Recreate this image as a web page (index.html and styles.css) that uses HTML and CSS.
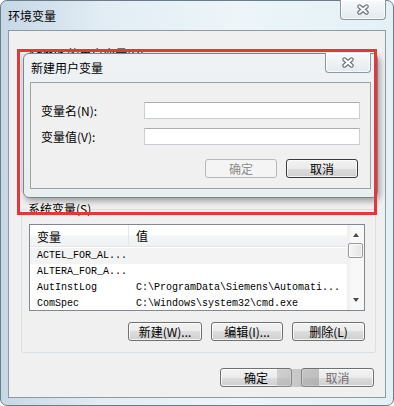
FILE: index.html
```html
<!DOCTYPE html>
<html lang="zh-CN">
  <head>
    <meta charset="UTF-8" />
    <title>环境变量</title>
    <link rel="stylesheet" href="styles.css">
  </head>
  <body>
    <div class="window">
      <div class="titlebar">
        <span class="title">环境变量</span>
        <button class="close" title="关闭">
          <svg width="14" height="11" viewBox="0 0 14 11">
            <path d="M3.5 2.5 L10.5 8.5 M10.5 2.5 L3.5 8.5" stroke="#66717b" stroke-width="4.4" stroke-linecap="round" fill="none" />
            <path d="M3.5 2.5 L10.5 8.5 M10.5 2.5 L3.5 8.5" stroke="#fff" stroke-width="2.2" stroke-linecap="round" fill="none" />
          </svg>
        </button>
      </div>

      <div class="client">
        <fieldset class="group user-group">
          <legend>Admin 的用户变量(U)</legend>
        </fieldset>

        <fieldset class="group sys-group">
          <legend>系统变量(S)</legend>
          <div class="listview">
            <div class="list-main">
              <div class="list-head">
                <span class="col-name">变量</span>
                <span class="col-value">值</span>
              </div>
              <div class="list-row selected">
                <span class="col-name">ACTEL_FOR_AL...</span>
                <span class="col-value"></span>
              </div>
              <div class="list-row">
                <span class="col-name">ALTERA_FOR_A...</span>
                <span class="col-value"></span>
              </div>
              <div class="list-row">
                <span class="col-name">AutInstLog</span>
                <span class="col-value">C:\ProgramData\Siemens\Automati...</span>
              </div>
              <div class="list-row">
                <span class="col-name">ComSpec</span>
                <span class="col-value">C:\Windows\system32\cmd.exe</span>
              </div>
            </div>
            <div class="scrollbar">
              <span class="arrow arrow-up"></span>
              <span class="thumb"></span>
              <span class="arrow arrow-down"></span>
            </div>
          </div>
          <div class="btn-row">
            <button class="btn w74">新建(W)...</button>
            <button class="btn w72">编辑(I)...</button>
            <button class="btn w73">删除(L)</button>
          </div>
        </fieldset>

        <div class="btn-row dialog-btns">
          <button class="btn w72">确定</button>
          <button class="btn w73 faded">取消</button>
        </div>
      </div>

      <!-- 叠在上面的“新建用户变量”对话框 -->
      <div class="dialog">
        <div class="titlebar dialog-titlebar">
          <span class="title">新建用户变量</span>
          <button class="close" title="关闭">
            <svg width="14" height="11" viewBox="0 0 14 11">
              <path d="M3.5 2.5 L10.5 8.5 M10.5 2.5 L3.5 8.5" stroke="#66717b" stroke-width="4.4" stroke-linecap="round" fill="none" />
              <path d="M3.5 2.5 L10.5 8.5 M10.5 2.5 L3.5 8.5" stroke="#fff" stroke-width="2.2" stroke-linecap="round" fill="none" />
            </svg>
          </button>
        </div>
        <div class="dialog-client">
          <div class="form-row">
            <label for="var-name">变量名(N):</label>
            <input id="var-name" type="text" />
          </div>
          <div class="form-row">
            <label for="var-value">变量值(V):</label>
            <input id="var-value" type="text" />
          </div>
          <div class="btn-row form-btns">
            <button class="btn w72" disabled>确定</button>
            <button class="btn w72 is-default">取消</button>
          </div>
        </div>
      </div>

      <div class="mark-box"></div>
      <div class="watermark"></div>
    </div>
  </body>
</html>
```

FILE: styles.css
```css
body {
  margin: 0;
  background: #ffffff;
  font-family: "Noto Sans CJK SC", "Liberation Sans", sans-serif;
  font-size: 12px;
  line-height: 14px;
  color: #000;
}

/* 外层窗口 */
.window {
  position: relative;
  width: 394px;
  height: 406px;
  box-sizing: border-box;
  border: 1px solid #6d7c89;
  border-radius: 7px;
  padding: 0 7px 7px 7px;
  background: linear-gradient(to right, #c6d7e6 0%, #e1ecf4 25%, #edf5f9 60%, #e3f1f6 100%);
  display: flex;
  flex-direction: column;
}

.titlebar {
  height: 29px;
  flex-shrink: 0;
  display: flex;
  justify-content: space-between;
  align-items: flex-start;
}

.title {
  align-self: center;
  color: #000;
}

.close {
  width: 46px;
  height: 20px;
  margin-top: -1px;
  padding: 0;
  border: 1px solid #8c969f;
  border-top: none;
  border-radius: 0 0 4px 4px;
  background: linear-gradient(#f7fafc, #e4eaef);
  box-shadow: inset 0 0 0 1px rgba(255, 255, 255, 0.8);
  display: flex;
  align-items: center;
  justify-content: center;
}

.client {
  flex: 1;
  border: 1px solid #8d99a4;
  background: #f0f0f0;
  padding: 0 9px 0 12px;
}

/* 分组框 */
.group {
  margin: 0;
  border: 1px solid #d5dfe5;
  border-radius: 3px;
  padding: 8px 10px 11px 7px;
  box-sizing: border-box;
}

.group legend {
  padding: 0 1px;
  margin-left: -2px;
  line-height: 14px;
}

.user-group {
  margin-top: 16px;
  height: 146px;
}

.sys-group {
  margin-top: 9px;
}

/* 列表 */
.listview {
  height: 87px;
  box-sizing: border-box;
  border: 1px solid #828790;
  background: #fff;
  display: flex;
}

.list-main {
  flex: 1;
  overflow: hidden;
}

.list-head {
  height: 22px;
  box-sizing: border-box;
  border-bottom: 1px solid #e5e5e5;
  background: linear-gradient(#ffffff 0%, #ffffff 45%, #f3f4f6 55%, #f1f2f4 100%);
  display: flex;
  align-items: center;
  margin-bottom: 1px;
  font-size: 12px;
}

.list-head .col-name {
  border-right: 1px solid #e3e8ee;
  height: 21px;
  line-height: 23px;
}

.list-head .col-value {
  line-height: 23px;
}

.col-name {
  width: 99px;
  box-sizing: border-box;
  padding-left: 7px;
  flex-shrink: 0;
}

.col-value {
  padding-left: 7px;
  white-space: nowrap;
}

.list-row {
  height: 16px;
  display: flex;
  align-items: center;
  font-family: "Liberation Mono", "DejaVu Sans Mono", monospace;
  font-size: 10px;
  white-space: nowrap;
}

.list-row.selected {
  background: #f3f3f3;
}

.scrollbar {
  width: 17px;
  flex-shrink: 0;
  background: linear-gradient(to right, #eeeeee, #f8f8f8 30%, #f8f8f8);
  display: flex;
  flex-direction: column;
  align-items: center;
}

.arrow {
  width: 0;
  height: 0;
  border-left: 3px solid transparent;
  border-right: 3px solid transparent;
}

.arrow-up {
  margin-top: 8px;
  border-bottom: 4px solid #4a4a4a;
}

.arrow-down {
  margin-top: auto;
  margin-bottom: 8px;
  border-top: 4px solid #4a4a4a;
}

.thumb {
  width: 15px;
  height: 15px;
  margin-top: 6px;
  box-sizing: border-box;
  border: 1px solid #9a9a9a;
  border-radius: 2px;
  background: linear-gradient(to right, #f6f6f6, #e3e3e3);
  box-shadow: inset 0 0 0 1px rgba(255, 255, 255, 0.7);
}

/* 按钮 */
.btn-row {
  display: flex;
  justify-content: flex-end;
  gap: 9px;
  margin-top: 11px;
}

.dialog-btns {
  margin-top: 15px;
  padding-right: 2px;
}

.btn {
  height: 19px;
  padding: 0;
  border: 1px solid #707070;
  border-radius: 3px;
  background: linear-gradient(#f2f2f2 0%, #ebebeb 50%, #dddddd 50%, #cfcfcf 100%);
  box-shadow: inset 0 0 0 1px rgba(255, 255, 255, 0.75);
  font-family: inherit;
  font-size: 12px;
  line-height: 14px;
  color: #000;
}

.btn:disabled {
  border-color: #b5b9bc;
  background: #f4f4f4;
  box-shadow: none;
  color: #8d8d8d;
}

.btn.is-default {
  border-color: #3a3a3a;
}

.btn.faded {
  color: #6f6f6f;
}

.w72 { width: 72px; }
.w73 { width: 73px; }
.w74 { width: 74px; }

/* 新建用户变量 对话框 */
.dialog {
  position: absolute;
  left: 22px;
  top: 52px;
  width: 355px;
  height: 145px;
  box-sizing: border-box;
  border: 1px solid #7b858e;
  border-radius: 6px;
  padding: 0 6px 8px 6px;
  background: linear-gradient(#eef2f5, #e9eef1);
  box-shadow: 2px 3px 6px rgba(0, 0, 0, 0.35);
  display: flex;
  flex-direction: column;
}

.dialog-titlebar {
  height: 28px;
  padding-left: 1px;
}

.dialog-client {
  flex: 1;
  border: 1px solid #9aa3ab;
  background: #f0f0f0;
  padding: 19px 10px 0 10px;
}

.form-row {
  display: grid;
  grid-template-columns: 103px 1fr;
  align-items: center;
  margin-bottom: 9px;
}

.form-row input {
  height: 17px;
  box-sizing: border-box;
  margin: 0;
  border: 1px solid #c9ced4;
  border-top-color: #abadb3;
  background: #fff;
  font: inherit;
}

.form-btns {
  margin-top: 14px;
  padding-right: 2px;
}

/* 红色标注框 */
.mark-box {
  position: absolute;
  left: 16px;
  top: 48px;
  width: 360px;
  height: 166px;
  box-sizing: border-box;
  border: 3px solid #e2383d;
}

/* 右下角水印残影 */
.watermark {
  position: absolute;
  left: 276px;
  top: 368px;
  width: 42px;
  height: 18px;
  background: linear-gradient(to right, rgba(170, 170, 170, 0.45), rgba(150, 150, 150, 0.55));
}
```
